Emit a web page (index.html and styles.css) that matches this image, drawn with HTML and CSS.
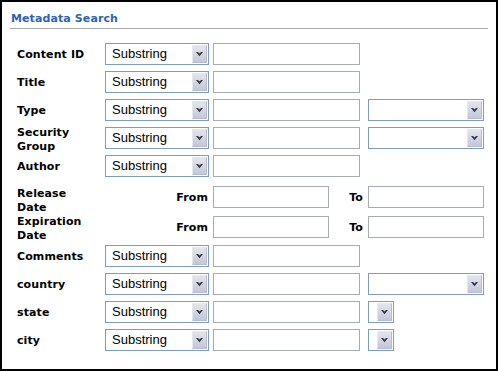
FILE: index.html
```html
<!DOCTYPE html>
<html lang="en">
<head>
    <meta charset="UTF-8">
    <title>Metadata Search</title>
    <link rel="stylesheet" href="styles.css">
</head>
<body>
    <div class="frame">
        <h2 class="section-title">Metadata Search</h2>

        <div class="fields">
            <div class="label">Content ID</div>
            <div class="combo"><span class="combo-text">Substring</span><span class="combo-btn"><svg width="7" height="5" viewBox="0 0 7 5"><polygon points="0,0 2,0 3.5,1.6 5,0 7,0 3.5,4.2" fill="#333"/></svg></span></div>
            <div class="cell"><input type="text" class="text-input"></div>
            <div></div>

            <div class="label">Title</div>
            <div class="combo"><span class="combo-text">Substring</span><span class="combo-btn"><svg width="7" height="5" viewBox="0 0 7 5"><polygon points="0,0 2,0 3.5,1.6 5,0 7,0 3.5,4.2" fill="#333"/></svg></span></div>
            <div class="cell"><input type="text" class="text-input"></div>
            <div></div>

            <div class="label">Type</div>
            <div class="combo"><span class="combo-text">Substring</span><span class="combo-btn"><svg width="7" height="5" viewBox="0 0 7 5"><polygon points="0,0 2,0 3.5,1.6 5,0 7,0 3.5,4.2" fill="#333"/></svg></span></div>
            <div class="cell"><input type="text" class="text-input"></div>
            <div class="combo combo-wide"><span class="combo-text"></span><span class="combo-btn"><svg width="7" height="5" viewBox="0 0 7 5"><polygon points="0,0 2,0 3.5,1.6 5,0 7,0 3.5,4.2" fill="#333"/></svg></span></div>

            <div class="label two-line">Security<br>Group</div>
            <div class="combo"><span class="combo-text">Substring</span><span class="combo-btn"><svg width="7" height="5" viewBox="0 0 7 5"><polygon points="0,0 2,0 3.5,1.6 5,0 7,0 3.5,4.2" fill="#333"/></svg></span></div>
            <div class="cell"><input type="text" class="text-input"></div>
            <div class="combo combo-wide"><span class="combo-text"></span><span class="combo-btn"><svg width="7" height="5" viewBox="0 0 7 5"><polygon points="0,0 2,0 3.5,1.6 5,0 7,0 3.5,4.2" fill="#333"/></svg></span></div>

            <div class="label">Author</div>
            <div class="combo"><span class="combo-text">Substring</span><span class="combo-btn"><svg width="7" height="5" viewBox="0 0 7 5"><polygon points="0,0 2,0 3.5,1.6 5,0 7,0 3.5,4.2" fill="#333"/></svg></span></div>
            <div class="cell"><input type="text" class="text-input"></div>
            <div></div>

            <div class="label two-line lower">Release<br>Date</div>
            <div class="range">
                <span class="range-label from">From</span>
                <input type="text" class="text-input short">
                <span class="range-label to">To</span>
                <input type="text" class="text-input short">
            </div>

            <div class="label two-line">Expiration<br>Date</div>
            <div class="range">
                <span class="range-label from">From</span>
                <input type="text" class="text-input short">
                <span class="range-label to">To</span>
                <input type="text" class="text-input short">
            </div>

            <div class="label">Comments</div>
            <div class="combo"><span class="combo-text">Substring</span><span class="combo-btn"><svg width="7" height="5" viewBox="0 0 7 5"><polygon points="0,0 2,0 3.5,1.6 5,0 7,0 3.5,4.2" fill="#333"/></svg></span></div>
            <div class="cell"><input type="text" class="text-input"></div>
            <div></div>

            <div class="label">country</div>
            <div class="combo"><span class="combo-text">Substring</span><span class="combo-btn"><svg width="7" height="5" viewBox="0 0 7 5"><polygon points="0,0 2,0 3.5,1.6 5,0 7,0 3.5,4.2" fill="#333"/></svg></span></div>
            <div class="cell"><input type="text" class="text-input"></div>
            <div class="combo combo-wide"><span class="combo-text"></span><span class="combo-btn"><svg width="7" height="5" viewBox="0 0 7 5"><polygon points="0,0 2,0 3.5,1.6 5,0 7,0 3.5,4.2" fill="#333"/></svg></span></div>

            <div class="label">state</div>
            <div class="combo"><span class="combo-text">Substring</span><span class="combo-btn"><svg width="7" height="5" viewBox="0 0 7 5"><polygon points="0,0 2,0 3.5,1.6 5,0 7,0 3.5,4.2" fill="#333"/></svg></span></div>
            <div class="cell"><input type="text" class="text-input"></div>
            <div class="combo combo-tiny"><span class="combo-text"></span><span class="combo-btn"><svg width="7" height="5" viewBox="0 0 7 5"><polygon points="0,0 2,0 3.5,1.6 5,0 7,0 3.5,4.2" fill="#333"/></svg></span></div>

            <div class="label">city</div>
            <div class="combo"><span class="combo-text">Substring</span><span class="combo-btn"><svg width="7" height="5" viewBox="0 0 7 5"><polygon points="0,0 2,0 3.5,1.6 5,0 7,0 3.5,4.2" fill="#333"/></svg></span></div>
            <div class="cell"><input type="text" class="text-input"></div>
            <div class="combo combo-tiny"><span class="combo-text"></span><span class="combo-btn"><svg width="7" height="5" viewBox="0 0 7 5"><polygon points="0,0 2,0 3.5,1.6 5,0 7,0 3.5,4.2" fill="#333"/></svg></span></div>
        </div>
    </div>
</body>
</html>
```

FILE: styles.css
```css
body { margin: 0; background: #fff; font-family: "DejaVu Sans", Verdana, sans-serif; }

.frame {
    width: 498px;
    height: 371px;
    box-sizing: border-box;
    border: 2px solid #000;
    background: #fff;
}

.section-title {
    margin: 10px 8px 0 8px;
    padding: 0 0 3px 1px;
    font-size: 11px;
    line-height: 13px;
    font-weight: bold;
    letter-spacing: 0.1px;
    color: #2a64b8;
    border-bottom: 1px solid #aaa;
}

.fields {
    display: grid;
    grid-template-columns: 88px 108px 155px 116px;
    grid-template-rows: repeat(5, 22px) 25px 24px 23px repeat(3, 22px);
    row-gap: 6px;
    margin: 14px 0 0 15px;
}

.label {
    align-self: center;
    padding-top: 2px;
    font-size: 11px;
    line-height: 14px;
    font-weight: bold;
    letter-spacing: 0.1px;
    color: #000;
}

/* two line labels sit a little lower than their row */
.label.two-line {
    align-self: end;
    padding-top: 0;
    margin-bottom: -5px;
}

.label.two-line.lower { margin-bottom: -7px; }

.cell { align-self: end; }

.text-input {
    display: block;
    width: 147px;
    height: 22px;
    box-sizing: border-box;
    margin: 0;
    padding: 0 3px;
    border: 1px solid #a5acb2;
    background: #fff;
}

.text-input.short { width: 116px; }

/* XP style combo box */
.combo {
    align-self: end;
    display: flex;
    width: 104px;
    height: 22px;
    box-sizing: border-box;
    padding: 1px;
    border: 1px solid #7f9db9;
    background: #fff;
}

.combo-wide { width: 116px; }
.combo-tiny { width: 26px; }

.combo-text {
    flex: 1;
    padding-left: 5px;
    font-family: "Liberation Sans", Arial, sans-serif;
    font-size: 13px;
    line-height: 18px;
    color: #000;
    white-space: nowrap;
}

.combo-btn {
    display: flex;
    align-items: center;
    justify-content: center;
    width: 15px;
    box-sizing: border-box;
    border: 1px solid #e4e6f0;
    border-right-color: #b8bccc;
    border-bottom-color: #b8bccc;
    background: linear-gradient(#e2e5f0, #c3c7d9);
}

.range {
    grid-column: 2 / 5;
    align-self: end;
    display: flex;
    align-items: center;
}

.range-label {
    font-size: 11px;
    font-weight: bold;
    letter-spacing: 0.1px;
    text-align: right;
    box-sizing: border-box;
}

.range-label.from { width: 108px; padding-right: 5px; }
.range-label.to { width: 39px; padding-right: 5px; }
```
